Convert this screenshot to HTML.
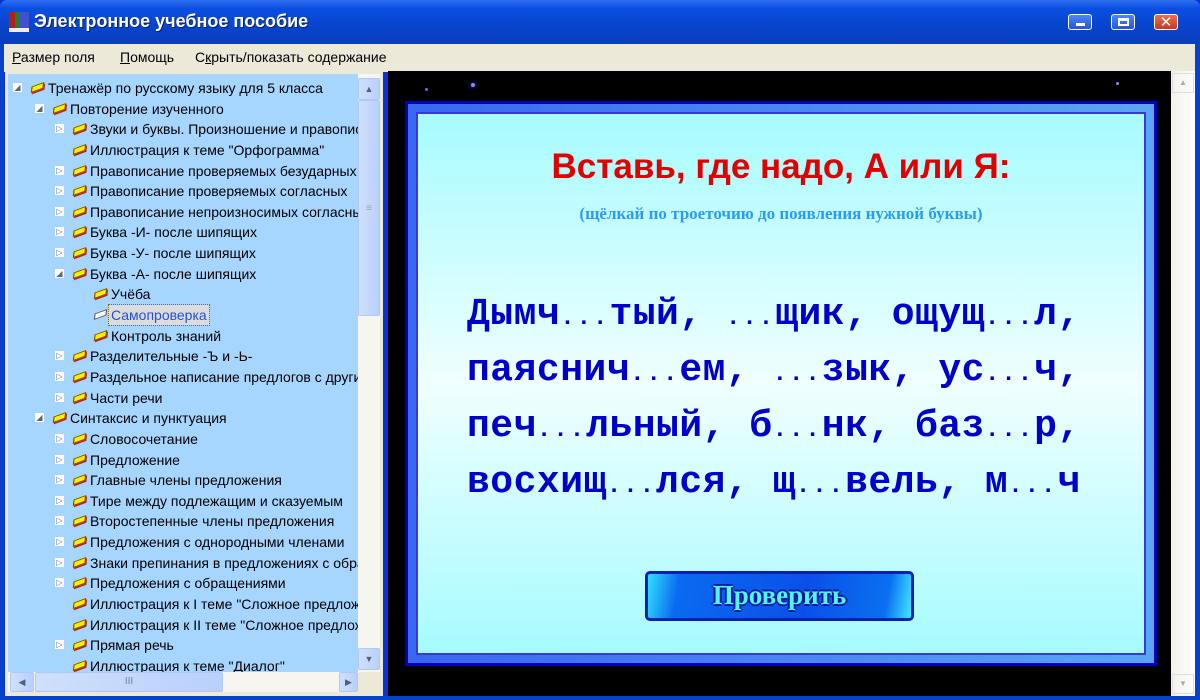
<!DOCTYPE html>
<html><head><meta charset="utf-8"><style>
*{margin:0;padding:0;box-sizing:border-box}
body{width:1200px;height:700px;overflow:hidden;background:#0831d9;font-family:"Liberation Sans","DejaVu Sans",sans-serif;position:relative}
.title{position:absolute;left:0;top:0;width:1200px;height:44px;background:linear-gradient(#2f6ff0,#0a4ee0 20%,#0842c8 70%,#0a3fb8);border-radius:7px 7px 0 0}
.title .t{position:absolute;left:34px;top:11px;color:#fff;font-weight:bold;font-size:18px;text-shadow:1px 1px #0a1e6e}
.btn{position:absolute;top:14px;width:24px;height:16px;border:1px solid #fff;border-radius:3px;background:linear-gradient(#4d85f5,#2557d8)}
.menu{position:absolute;left:4px;top:44px;width:1191px;height:28px;background:#ece9d8;font-size:14px;color:#000}
.menu span{position:absolute;top:5px}
.tree{position:absolute;left:5px;top:71px;width:378px;height:625px;background:#ece9d8}
.tin{position:absolute;left:3px;top:3px;width:350px;height:598px;background:#a6d5ff;overflow:hidden}
.row{position:absolute;height:20px;font-size:14px;line-height:20px;white-space:nowrap;color:#000}
.ic{position:absolute;width:11px;height:7px;background:#ffef00;border:1px solid #7a4a00;transform:skewX(-30deg) rotate(-25deg);box-shadow:1px 2px 0 #c02020}
.ex{position:absolute;width:9px;height:9px;background:#fff;font-size:8px;line-height:9px;color:#666;text-align:center}
.vs{position:absolute;left:353px;top:3px;width:22px;height:598px;background:#f6f5f0}
.sb{position:absolute;background:linear-gradient(90deg,#cfe0fd,#b9d0fb);border:1px solid #b0c8f5;border-radius:2px}
.main{position:absolute;left:388px;top:71px;width:783px;height:625px;background:#000}
.rs{position:absolute;left:1171px;top:71px;width:24px;height:625px;background:linear-gradient(90deg,#f2f1ea,#fefefd)}
.card{position:absolute;left:17px;top:30px;width:752px;height:565px;background:#0000b8;padding:3px}
.frame{width:100%;height:100%;background:linear-gradient(90deg,#3a66f0,#5aa6f5);padding:8px}
.inner{width:100%;height:100%;border:2px solid #3b39d0;background:linear-gradient(#a6fbff,#f0ffff 50%,#a6fbff);position:relative;text-align:center}
.h1{position:absolute;left:0;right:0;top:33px;color:#e00000;font-weight:bold;font-size:35px}
.h2{position:absolute;left:0;right:0;top:90px;color:#2a9cf5;font-weight:bold;font-size:17px;font-family:"Liberation Serif",serif}
.body{position:absolute;left:49px;top:175px;text-align:left;color:#0000c8;font-family:"Liberation Mono",monospace;font-weight:bold;font-size:38px;line-height:52px;white-space:pre;letter-spacing:0.5px}
.body i{font-style:normal;font-size:24px;letter-spacing:2px}
.pb{position:absolute;left:227px;top:457px;width:269px;height:50px;border:3px solid #0a20b0;border-radius:5px;background:linear-gradient(100deg,#30e0ff 0,#0a6af0 12%,#0a50e8 60%,#0a70f0 90%,#40e8ff 100%);font-family:"Liberation Serif",serif;font-weight:bold;font-size:27px;color:#4ff6ff;line-height:42px;text-shadow:-2px 0 #0a1aa0,2px 0 #0a1aa0,0 2px #0a1aa0,0 -2px #0a1aa0}
</style></head><body>
<div class="title">
<div style="position:absolute;left:9px;top:12px;width:20px;height:20px;background:linear-gradient(90deg,#b02020 30%,#208030 30% 55%,#4050d0 55%);border-bottom:4px solid #eee"></div>
<div class="t">Электронное учебное пособие</div>
<div class="btn" style="left:1068px"><div style="position:absolute;left:7px;top:8px;width:9px;height:3px;background:#fff"></div></div>
<div class="btn" style="left:1111px"><div style="position:absolute;left:6px;top:3px;width:11px;height:8px;border:2px solid #fff;border-top-width:3px"></div></div>
<div class="btn" style="left:1154px;background:linear-gradient(#e87055,#c8381c)"><div style="position:absolute;left:0;right:0;top:-2px;text-align:center;color:#fff;font-weight:bold;font-size:15px">✕</div></div>
</div>
<div style="position:absolute;left:0;top:44px;width:4px;height:656px;background:#0842c8"></div>
<div style="position:absolute;left:1195px;top:44px;width:5px;height:656px;background:#0842c8"></div>
<div class="menu"><span style="left:8px"><u>Р</u>азмер поля</span><span style="left:116px"><u>П</u>омощь</span><span style="left:191px">С<u>к</u>рыть/показать содержание</span></div>
<div style="position:absolute;left:4px;top:696px;width:1191px;height:4px;background:#0842c8"></div>
<div class="tree"><div class="tin" id="t"></div>
<div class="vs"><div class="sb" style="left:0;top:4px;width:22px;height:22px;text-align:center;color:#4d6185;font-size:9px;line-height:20px">▲</div>
<div class="sb" style="left:0;top:26px;width:22px;height:216px;text-align:center;line-height:216px;color:#8aa;font-size:10px">≡</div>
<div class="sb" style="left:0;top:574px;width:22px;height:22px;text-align:center;color:#4d6185;font-size:9px;line-height:20px">▼</div></div>
<div style="position:absolute;left:3px;top:601px;width:350px;height:20px;background:#f6f5f0">
<div class="sb" style="left:2px;top:0;width:24px;height:20px;text-align:center;color:#4d6185;font-size:9px;line-height:18px">◀</div>
<div class="sb" style="left:27px;top:0;width:188px;height:20px;text-align:center;color:#6a80b0;font-size:10px;line-height:18px">III</div>
<div class="sb" style="left:331px;top:0;width:19px;height:20px;text-align:center;color:#4d6185;font-size:9px;line-height:18px">▶</div></div>
</div>
<div class="main">
<div style="position:absolute;left:37px;top:17px;width:3px;height:3px;background:#66f;border-radius:50%"></div>
<div style="position:absolute;left:83px;top:12px;width:4px;height:4px;background:#88f;border-radius:50%;box-shadow:0 0 4px #44f"></div>
<div style="position:absolute;left:728px;top:11px;width:3px;height:3px;background:#88f;border-radius:50%"></div>
<div class="card"><div class="frame"><div class="inner">
<div class="h1">Вставь, где надо, А или Я:</div>
<div class="h2">(щёлкай по троеточию до появления нужной буквы)</div>
<div class="body">Дымч<i>...</i>тый, <i>...</i>щик, ощущ<i>...</i>л,
паяснич<i>...</i>ем, <i>...</i>зык, ус<i>...</i>ч,
печ<i>...</i>льный, б<i>...</i>нк, баз<i>...</i>р,
восхищ<i>...</i>лся, щ<i>...</i>вель, м<i>...</i>ч</div>
<div class="pb">Проверить</div>
</div></div></div>
</div>
<div class="rs"><div style="position:absolute;left:1px;top:2px;width:22px;height:20px;border:1px solid #ddd;text-align:center;color:#aaa;font-size:8px;line-height:18px">▲</div><div style="position:absolute;left:1px;top:603px;width:22px;height:20px;border:1px solid #ddd;text-align:center;color:#aaa;font-size:8px;line-height:18px">▼</div></div>
<script>
var R=[[0,'o','Тренажёр по русскому языку для 5 класса'],[1,'o','Повторение изученного'],[2,'c','Звуки и буквы. Произношение и правописание'],[2,'','Иллюстрация к теме "Орфограмма"'],[2,'c','Правописание проверяемых безударных'],[2,'c','Правописание проверяемых согласных'],[2,'c','Правописание непроизносимых согласных'],[2,'c','Буква -И- после шипящих'],[2,'c','Буква -У- после шипящих'],[2,'o','Буква -А- после шипящих'],[3,'','Учёба'],[3,'s','Самопроверка'],[3,'','Контроль знаний'],[2,'c','Разделительные -Ъ и -Ь-'],[2,'c','Раздельное написание предлогов с другими'],[2,'c','Части речи'],[1,'o','Синтаксис и пунктуация'],[2,'c','Словосочетание'],[2,'c','Предложение'],[2,'c','Главные члены предложения'],[2,'c','Тире между подлежащим и сказуемым'],[2,'c','Второстепенные члены предложения'],[2,'c','Предложения с однородными членами'],[2,'c','Знаки препинания в предложениях с обращениями'],[2,'c','Предложения с обращениями'],[2,'','Иллюстрация к I теме "Сложное предложение"'],[2,'','Иллюстрация к II теме "Сложное предложение"'],[2,'c','Прямая речь'],[2,'','Иллюстрация к теме "Диалог"']];
var h='';R.forEach(function(r,i){var y=4+i*20.64,L=r[0],x=[40,62,82,103][L];
if(r[1]=='o'||r[1]=='c')h+='<div class="ex" style="left:'+(x-35)+'px;top:'+(y+5)+'px">'+(r[1]=='o'?'◢':'▷')+'</div>';
h+='<div class="ic" style="left:'+(x-16)+'px;top:'+(y+6)+'px;'+(r[1]=='s'?'background:#fff;border-color:#555;box-shadow:none':'')+'"></div>';
h+='<div class="row" style="left:'+x+'px;top:'+y+'px;'+(r[1]=='s'?'color:#2050e0;background:#ddd;outline:1px dotted #a06000;padding:0 2px;margin-left:-2px':'')+'">'+r[2]+'</div>';});
document.getElementById('t').innerHTML=h;
</script>
</body></html>
